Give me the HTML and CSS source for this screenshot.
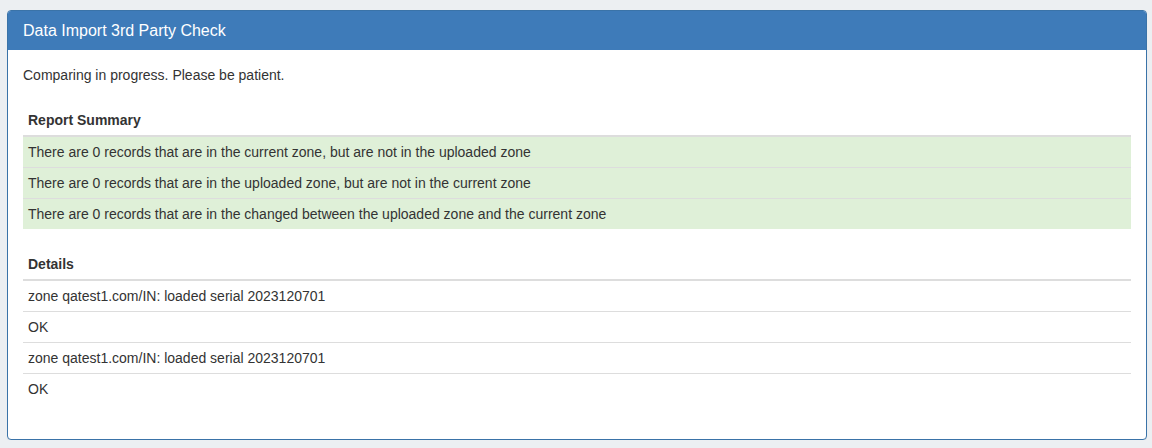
FILE: index.html
```html
<!DOCTYPE html>
<html>
<head>
<meta charset="utf-8">
<link rel="stylesheet" href="styles.css">
</head>
<body>
<div class="page">
  <div class="panel">
    <div class="panel-heading">Data Import 3rd Party Check</div>
    <div class="panel-body">
      <p class="status">Comparing in progress. Please be patient.</p>
      <table class="tbl tbl-summary">
        <thead><tr><th>Report Summary</th></tr></thead>
        <tbody>
          <tr class="success"><td>There are 0 records that are in the current zone, but are not in the uploaded zone</td></tr>
          <tr class="success"><td>There are 0 records that are in the uploaded zone, but are not in the current zone</td></tr>
          <tr class="success"><td>There are 0 records that are in the changed between the uploaded zone and the current zone</td></tr>
        </tbody>
      </table>
      <table class="tbl">
        <thead><tr><th>Details</th></tr></thead>
        <tbody>
          <tr><td>zone qatest1.com/IN: loaded serial 2023120701</td></tr>
          <tr><td>OK</td></tr>
          <tr><td>zone qatest1.com/IN: loaded serial 2023120701</td></tr>
          <tr><td>OK</td></tr>
        </tbody>
      </table>
    </div>
  </div>
</div>
</body>
</html>
```

FILE: styles.css
```css
html, body {
  margin: 0;
  padding: 0;
  background: #eceff2;
  font-family: "Liberation Sans", Arial, Helvetica, sans-serif;
  font-size: 14px;
  line-height: 20px;
  color: #333;
}
.page {
  padding: 10px 5px 0 7px;
}
.panel {
  background: #fff;
  border: 1px solid #3a73a8;
  border-radius: 4px;
  overflow: hidden;
  box-shadow: 0 1px 1px rgba(0,0,0,0.05);
}
.panel-heading {
  background: #3e7bb9;
  color: #fff;
  font-size: 16px;
  line-height: 19px;
  padding: 10px 15px 10px 15px;
  height: 19px;
}
.panel-body {
  padding: 15px;
}
.status {
  margin: 0 0 20px 0;
}
.tbl {
  width: 100%;
  border-collapse: collapse;
  border-spacing: 0;
  margin-bottom: 20px;
}
.tbl:last-child {
  margin-bottom: 20px;
}
.tbl th {
  text-align: left;
  font-weight: bold;
  padding: 5px;
  border-bottom: 2px solid #ddd;
}
.tbl td {
  padding: 5px;
  border-top: 1px solid #ddd;
}
.tbl tbody tr:first-child td {
  border-top: 0;
}
.tbl tr.success td {
  background: #dff0d8;
}
```
